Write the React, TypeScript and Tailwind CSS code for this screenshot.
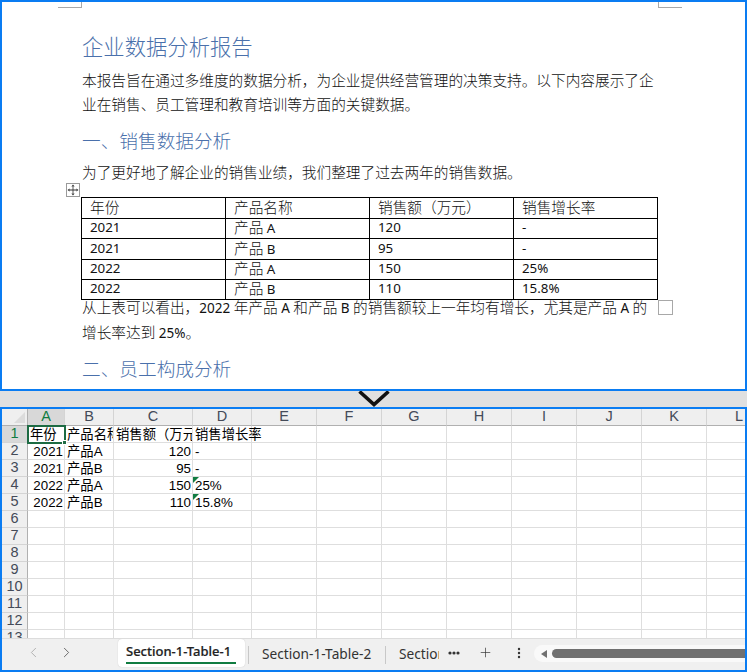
import { ChevronLeft, ChevronRight, Plus } from "lucide-react";

const wordRows = [
  { h: "h-[20px]", c: ["年份", "产品名称", "销售额（万元）", "销售增长率"] },
  { h: "h-[19px]", c: ["2021", "产品 A", "120", "-"] },
  { h: "h-[20px]", c: ["2021", "产品 B", "95", "-"] },
  { h: "h-[19px]", c: ["2022", "产品 A", "150", "25%"] },
  { h: "h-[19px]", c: ["2022", "产品 B", "110", "15.8%"] },
];

const letters = ["A", "B", "C", "D", "E", "F", "G", "H", "I", "J", "K", "L"];

const sheet: Record<number, string[]> = {
  1: ["年份", "产品名称", "销售额（万元）", "销售增长率"],
  2: ["2021", "产品A", "120", "-"],
  3: ["2021", "产品B", "95", "-"],
  4: ["2022", "产品A", "150", "25%"],
  5: ["2022", "产品B", "110", "15.8%"],
};

function Cjk({ children }: { children: string }) {
  return <span className="text-[14.67px] font-light">{children}</span>;
}

function Cell({ row, col }: { row: number; col: number }) {
  const text = sheet[row]?.[col] ?? "";
  const numeric = row > 1 && (col === 0 || col === 2);
  return (
    <div
      className={`relative h-[17px] border-r border-b border-[#dedede] bg-white text-[13.33px] leading-[17px] whitespace-nowrap text-black ${
        col === 3 ? "overflow-visible" : "overflow-hidden"
      } ${numeric ? "pr-[1px] text-right" : "pl-[2px] text-left"}`}
    >
      <span className={col === 3 ? "relative z-10" : ""}>{text}</span>
      {col === 3 && (row === 4 || row === 5) && (
        <span className="absolute top-0 left-0 h-0 w-0 border-t-[6px] border-r-[6px] border-t-[#107c41] border-r-transparent" />
      )}
    </div>
  );
}

export default function App() {
  return (
    <div className="flex h-[672px] w-[747px] flex-col overflow-hidden bg-[#e0e0e0] font-['Liberation_Sans','Noto_Sans_CJK_SC',sans-serif]">
      {/* Word pane */}
      <div className="relative h-[391px] overflow-hidden border-2 border-[#0a7cf2] bg-white pt-[29px] pl-[80px] font-['Noto_Sans','Noto_Sans_CJK_SC',sans-serif] text-black">
        <span className="absolute top-0 left-[56px] h-[6px] w-[24px] border-r border-b border-[#a8a8a8]" />
        <span className="absolute top-0 left-[656px] h-[6px] w-[24px] border-b border-l border-[#a8a8a8]" />

        <h1 className="h-[32px] text-[21.33px] leading-[32px] font-light text-[#4a70ab]">企业数据分析报告</h1>
        <p className="mt-[5px] text-[14.67px] leading-[24px] font-light whitespace-nowrap text-[#111]">
          本报告旨在通过多维度的数据分析，为企业提供经营管理的决策支持。以下内容展示了企
          <br />
          业在销售、员工管理和教育培训等方面的关键数据。
        </p>
        <h2 className="mt-[10px] h-[30px] text-[18.67px] leading-[30px] font-light text-[#4a70ab]">一、销售数据分析</h2>
        <p className="mt-[4px] text-[14.67px] leading-[24px] font-light whitespace-nowrap text-[#111]">为了更好地了解企业的销售业绩，我们整理了过去两年的销售数据。</p>

        <span className="absolute top-[181px] left-[64px] flex h-[14px] w-[14px] items-center justify-center border border-[#9a9a9a] bg-white">
          <svg width="12" height="12" viewBox="0 0 12 12" fill="#333" stroke="none">
            <path d="M5.6 2.5H6.4V5.6H9.5V6.4H6.4V9.5H5.6V6.4H2.5V5.6H5.6Z" />
            <path d="M6 0.5L7.6 2.6H4.4ZM6 11.5L4.4 9.4H7.6ZM0.5 6L2.6 4.4V7.6ZM11.5 6L9.4 7.6V4.4Z" />
          </svg>
        </span>

        <table className="mt-[13px] -ml-[1px] w-[577px] table-fixed border-collapse border border-black text-[13.33px]">
          <tbody>
            {wordRows.map((r, i) => (
              <tr key={i}>
                {r.c.map((c, j) => (
                  <td key={j} className="overflow-hidden border border-black p-0 pl-[8px] whitespace-nowrap text-[#111]">
                    <div className={`${r.h} flex items-center pb-[1px] leading-none ${i === 0 ? "text-[14.67px] font-light" : ""}`}>
                      {c.startsWith("产品") && i > 0 ? (
                        <span>
                          <Cjk>产品</Cjk>
                          {c.slice(2)}
                        </span>
                      ) : (
                        c
                      )}
                    </div>
                  </td>
                ))}
              </tr>
            ))}
          </tbody>
        </table>

        <p className="-mt-[5px] text-[13.5px] leading-[24px] whitespace-nowrap text-[#111]">
          <Cjk>从上表可以看出，</Cjk>2022 <Cjk>年产品</Cjk> A <Cjk>和产品</Cjk> B <Cjk>的销售额较上一年均有增长，尤其是产品</Cjk> A <Cjk>的</Cjk>
          <br />
          <Cjk>增长率达到</Cjk> 25%<Cjk>。</Cjk>
        </p>
        <h2 className="mt-[9px] h-[30px] text-[18.67px] leading-[30px] font-light text-[#4a70ab]">二、员工构成分析</h2>

        <span className="absolute top-[298px] left-[656px] h-[15px] w-[15px] border border-[#a8a8a8] bg-white" />
      </div>

      {/* Splitter */}
      <div className="flex h-[16px] items-center justify-center bg-[#e0e0e0]">
        <svg width="32" height="16" viewBox="0 0 32 16" fill="none" stroke="#111" strokeWidth="3.6">
          <path d="M1.5 0.5L16 13.5L30.5 0.5" />
        </svg>
      </div>

      {/* Spreadsheet pane */}
      <div className="flex h-[265px] flex-col overflow-hidden border-2 border-[#0a7cf2] bg-white">
        <div className="relative h-[229px] overflow-hidden">
          <div className="grid grid-cols-[26px_37px_49px_79px_59px_65px_65px_65px_65px_65px_65px_65px_65px] grid-rows-[17px]">
            <div className="relative h-[17px] border-r border-b border-[#b0b0b0] bg-[#efefef]">
              <span className="absolute right-[2px] bottom-[2px] h-0 w-0 border-b-[11px] border-l-[11px] border-b-[#dcdcdc] border-l-transparent" />
            </div>
            {letters.map((l, i) => (
              <div
                key={l}
                className={`flex h-[17px] items-center justify-center border-r border-b border-r-[#d4d4d4] border-b-[#b0b0b0] text-[14.5px] ${
                  i === 0 ? "bg-[#d8d8d8] text-[#107c41]" : "bg-[#efefef] text-[#444a58]"
                }`}
              >
                {l}
              </div>
            ))}
            {Array.from({ length: 13 }, (_, r) => r + 1).map((row) => (
              <div key={row} className="contents">
                <div
                  className={`flex h-[17px] items-center justify-center border-r border-b border-r-[#b0b0b0] border-b-[#d4d4d4] text-[14.5px] ${
                    row === 1 ? "bg-[#d8d8d8] text-[#107c41]" : "bg-[#efefef] text-[#444a58]"
                  }`}
                >
                  {row}
                </div>
                {letters.map((_, col) => (
                  <Cell key={col} row={row} col={col} />
                ))}
              </div>
            ))}
          </div>
          <span className="absolute top-[16px] left-[25px] h-[19px] w-[39px] border-2 border-[#1d6b43]" />
          <span className="absolute top-[31px] left-[60px] h-[5px] w-[5px] border border-white bg-[#1d6b43]" />
        </div>

        {/* Tab bar */}
        <div className="flex h-[32px] items-start overflow-hidden border-t border-[#dcdcdc] bg-[#f0f0f0] font-['Noto_Sans',sans-serif] text-[13.7px] text-[#333]">
          <div className="flex h-[30px] w-[116px] shrink-0 items-center pb-[4px] pl-[23px]">
            <ChevronLeft size={17} strokeWidth={1.2} className="text-[#a8a8a8]" />
            <ChevronRight size={17} strokeWidth={1.2} className="ml-[16px] text-[#555]" />
          </div>
          <div className="flex h-[28px] w-[127px] shrink-0 flex-col items-start rounded-[4px] bg-white pl-[8px] shadow-[0_0_1px_#bbb]">
            <span className="mt-[2px] text-[13px] leading-[20px] font-medium whitespace-nowrap text-[#222] [-webkit-text-stroke:0.2px_#222]">Section-1-Table-1</span>
            <span className="mt-[1px] h-[2px] w-[110px] bg-[#107c41]" />
          </div>
          <span className="mt-[7px] ml-[3px] h-[18px] w-px shrink-0 bg-[#c8c8c8]" />
          <span className="mt-[5px] ml-[13px] w-[110px] shrink-0 leading-[20px] whitespace-nowrap">Section-1-Table-2</span>
          <span className="mt-[7px] ml-[13px] h-[18px] w-px shrink-0 bg-[#c8c8c8]" />
          <span className="mt-[5px] ml-[13px] w-[40px] shrink-0 overflow-hidden leading-[20px] whitespace-nowrap">Section-1-Table-3</span>
          <svg className="mt-[11px] ml-[9px] shrink-0" width="12" height="6" viewBox="0 0 12 6" fill="#333">
            <circle cx="2" cy="3" r="1.6" />
            <circle cx="6" cy="3" r="1.6" />
            <circle cx="10" cy="3" r="1.6" />
          </svg>
          <Plus size={15} strokeWidth={1.1} className="mt-[6px] ml-[18px] shrink-0 text-[#333]" />
          <svg className="mt-[8px] ml-[24px] shrink-0" width="4" height="12" viewBox="0 0 4 12" fill="#333">
            <circle cx="2" cy="2" r="1.2" />
            <circle cx="2" cy="6" r="1.2" />
            <circle cx="2" cy="10" r="1.2" />
          </svg>
          <div className="mt-[6px] ml-[13px] flex h-[17px] flex-1 items-center rounded-l-full bg-[#f9f9f9] pl-[7px]">
            <span className="h-0 w-0 border-y-[4px] border-r-[6px] border-y-transparent border-r-[#707070]" />
            <span className="ml-[5px] h-[9px] flex-1 rounded-l-full bg-[#707070]" />
          </div>
        </div>
      </div>
    </div>
  );
}
